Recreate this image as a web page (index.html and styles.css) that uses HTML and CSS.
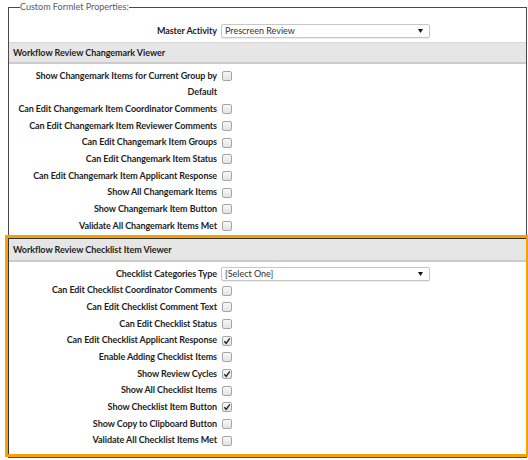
FILE: index.html
```html
<!DOCTYPE html>
<html lang="en">
<head>
<meta charset="utf-8">
<title>Custom Formlet Properties</title>
<link rel="stylesheet" href="styles.css">
</head>
<body>
<fieldset class="formlet">
  <legend>Custom Formlet Properties:</legend>
  <div class="grid master">
    <div class="lbl">Master Activity</div>
    <div class="ctl"><div class="select"><span class="sel-text">Prescreen Review</span><svg class="arrow" width="5" height="4" viewBox="0 0 5 4"><path d="M0 0H5L2.5 4Z" fill="#111"/></svg></div></div>
  </div>

  <section class="panel">
    <div class="panel-head">Workflow Review Changemark Viewer</div>
    <div class="grid rows">
      <div class="lbl">Show Changemark Items for Current Group by Default</div><div class="ctl"><span class="cb"></span></div>
      <div class="lbl">Can Edit Changemark Item Coordinator Comments</div><div class="ctl"><span class="cb"></span></div>
      <div class="lbl">Can Edit Changemark Item Reviewer Comments</div><div class="ctl"><span class="cb"></span></div>
      <div class="lbl">Can Edit Changemark Item Groups</div><div class="ctl"><span class="cb"></span></div>
      <div class="lbl">Can Edit Changemark Item Status</div><div class="ctl"><span class="cb"></span></div>
      <div class="lbl">Can Edit Changemark Item Applicant Response</div><div class="ctl"><span class="cb"></span></div>
      <div class="lbl">Show All Changemark Items</div><div class="ctl"><span class="cb"></span></div>
      <div class="lbl">Show Changemark Item Button</div><div class="ctl"><span class="cb"></span></div>
      <div class="lbl">Validate All Changemark Items Met</div><div class="ctl"><span class="cb"></span></div>
    </div>
  </section>

  <section class="panel highlight">
    <div class="hl-inner">
      <div class="panel-head">Workflow Review Checklist Item Viewer</div>
      <div class="grid rows rows-last">
        <div class="lbl">Checklist Categories Type</div><div class="ctl"><div class="select"><span class="sel-text">[Select One]</span><svg class="arrow" width="5" height="4" viewBox="0 0 5 4"><path d="M0 0H5L2.5 4Z" fill="#111"/></svg></div></div>
        <div class="lbl">Can Edit Checklist Coordinator Comments</div><div class="ctl"><span class="cb"></span></div>
        <div class="lbl">Can Edit Checklist Comment Text</div><div class="ctl"><span class="cb"></span></div>
        <div class="lbl">Can Edit Checklist Status</div><div class="ctl"><span class="cb"></span></div>
        <div class="lbl">Can Edit Checklist Applicant Response</div><div class="ctl"><span class="cb checked"><svg width="8" height="8" viewBox="0 0 8 8"><path d="M1.3 4.3L3.2 6.3L6.8 1.4" fill="none" stroke="#222" stroke-width="1.4"/></svg></span></div>
        <div class="lbl">Enable Adding Checklist Items</div><div class="ctl"><span class="cb"></span></div>
        <div class="lbl">Show Review Cycles</div><div class="ctl"><span class="cb checked"><svg width="8" height="8" viewBox="0 0 8 8"><path d="M1.3 4.3L3.2 6.3L6.8 1.4" fill="none" stroke="#222" stroke-width="1.4"/></svg></span></div>
        <div class="lbl">Show All Checklist Items</div><div class="ctl"><span class="cb"></span></div>
        <div class="lbl">Show Checklist Item Button</div><div class="ctl"><span class="cb checked"><svg width="8" height="8" viewBox="0 0 8 8"><path d="M1.3 4.3L3.2 6.3L6.8 1.4" fill="none" stroke="#222" stroke-width="1.4"/></svg></span></div>
        <div class="lbl">Show Copy to Clipboard Button</div><div class="ctl"><span class="cb"></span></div>
        <div class="lbl">Validate All Checklist Items Met</div><div class="ctl"><span class="cb"></span></div>
      </div>
    </div>
  </section>
</fieldset>
</body>
</html>
```
FILE: styles.css
```css
html, body {
  margin: 0;
  padding: 0;
  background: #fff;
}
body {
  font-family: Lato, "Open Sans", sans-serif;
  color: #1e1e1e;
}
.formlet {
  margin: 0 1px 0 8px;
  padding: 0;
  border: 1px solid #4a4a4a;
  min-width: 0;
}
.formlet legend {
  margin-left: 11px;
  padding: 0;
  font-size: 9px;
  line-height: 14px;
  color: #5a5a5a;
}
.grid {
  display: grid;
  grid-template-columns: 208px 1fr;
  column-gap: 5px;
}
.lbl {
  font-weight: bold;
  font-size: 9px;
  letter-spacing: -0.08px;
  line-height: 16.667px;
  text-align: right;
  color: #1e1e1e;
}
.ctl {
  height: 16.667px;
  display: flex;
  align-items: center;
}
.master {
  padding: 8.67px 0 2.66px;
}
.panel-head {
  background: #e6e6e6;
  border-top: 1px solid #d6d6d6;
  border-bottom: 2px solid #cbcbcb;
  height: 19px;
  line-height: 19px;
  padding-left: 4px;
  font-size: 9px;
  letter-spacing: -0.06px;
  font-weight: bold;
  color: #1e1e1e;
}
.rows {
  padding: 3.67px 0 0.66px;
}
.highlight {
  margin: 0 -3px 0 -4px;
  border: 3px solid #f5a200;
}
.hl-inner {
  border-left: 1px solid #333;
  border-top: 1px solid #333;
}
.hl-inner .panel-head {
  border-top: none;
  height: 21px;
  line-height: 21px;
}
.rows-last {
  padding: 3.67px 0 5px;
}
.cb {
  box-sizing: border-box;
  width: 10px;
  height: 10px;
  border: 1px solid #a5a5a5;
  border-radius: 2px;
  background: linear-gradient(#f7f7f7, #e3e3e3);
  display: flex;
  align-items: center;
  justify-content: center;
}
.select {
  box-sizing: border-box;
  margin-left: -1px;
  width: 209px;
  height: 14px;
  border: 1px solid #c6c6c6;
  border-radius: 2px;
  box-shadow: 0 1px 1px rgba(0,0,0,0.08);
  background: #fff;
  display: flex;
  align-items: center;
  justify-content: space-between;
  padding: 0 6px 0 3px;
}
.sel-text {
  font-size: 9px;
  color: #333;
  line-height: 12px;
}
.arrow {
  display: block;
}
```
